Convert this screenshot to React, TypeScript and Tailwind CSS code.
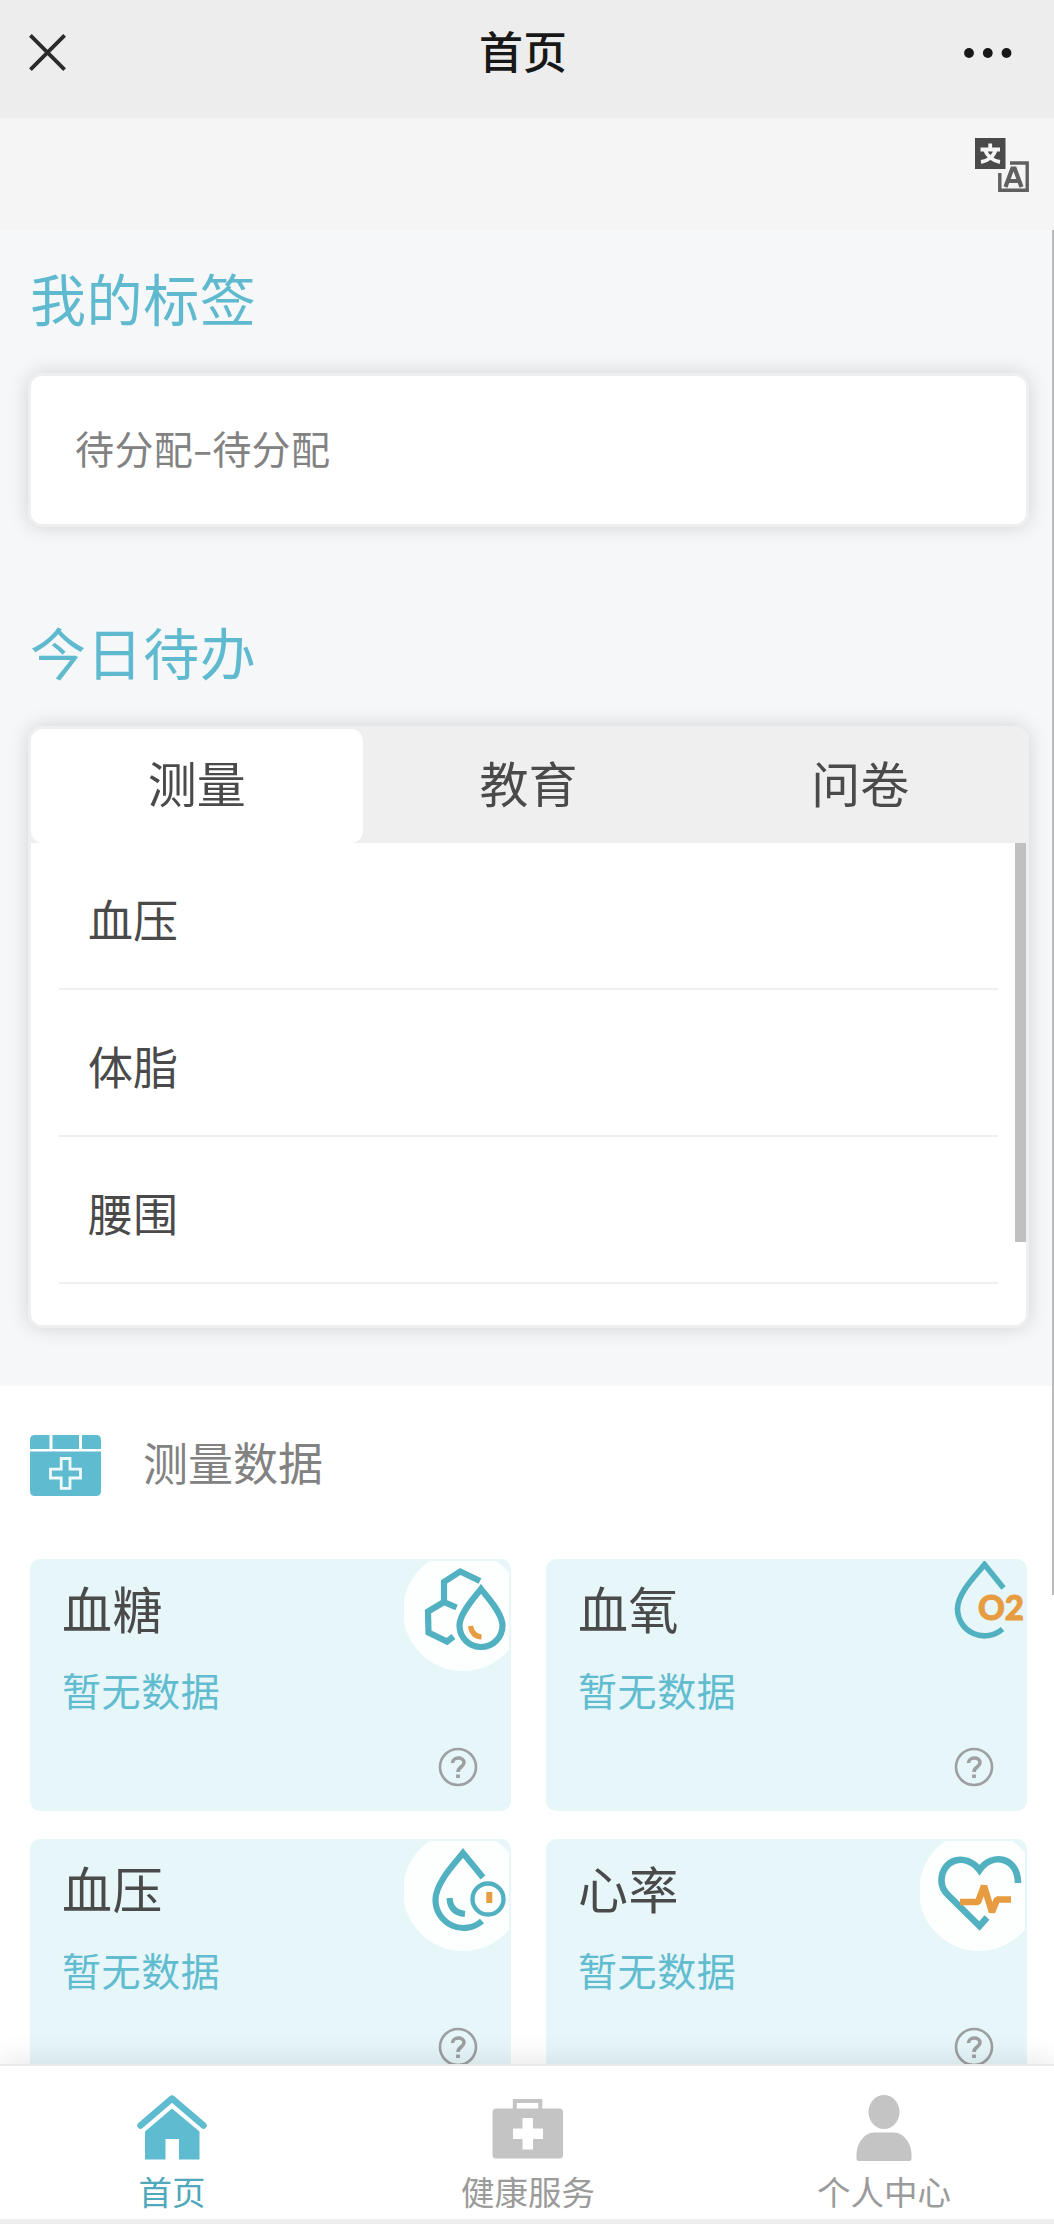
import { useState } from 'react';
import type { ReactNode } from 'react';

const TABS = ['测量', '教育', '问卷'] as const;
const TODOS = ['血压', '体脂', '腰围'];

const TEAL = '#52b1c1';
const ORANGE = '#e89c41';

function CloseIcon() {
  return (
    <svg width="37" height="37" viewBox="0 0 37 37" fill="none" stroke="#2b2b2b" strokeWidth="3.8">
      <path d="M1.4 1.4 L35.6 35.6 M35.6 1.4 L1.4 35.6" />
    </svg>
  );
}

function MoreIcon() {
  return (
    <svg width="48" height="10" viewBox="0 0 48 10" fill="#181818">
      <circle cx="5" cy="5" r="4.9" />
      <circle cx="23.8" cy="5" r="4.9" />
      <circle cx="42.5" cy="5" r="4.9" />
    </svg>
  );
}

function TranslateIcon() {
  return (
    <svg width="54" height="54" viewBox="0 0 54 54" fill="none">
      <rect width="30.5" height="31" fill="#4a4a4a" />
      <path d="M5.5 11.5 H25 M15.2 5.5 V11 M20.5 12 C19 18 13 23 6 24 M10 12 C12 18 18 23 25 24" stroke="#f5f5f5" strokeWidth="3.8" />
      <path d="M35 25 H52.2 V52.2 H24.8 V35" stroke="#606060" strokeWidth="3.4" />
      <path d="M30.5 49 L37.3 30.5 H39.7 L46.5 49 M33 43 H44" stroke="#606060" strokeWidth="4.2" />
    </svg>
  );
}

function CalendarIcon() {
  return (
    <svg width="72" height="62" viewBox="0 0 72 62" fill="#5fbbcf">
      <path d="M5 0 H19.5 V14 H0 V5 Q0 0 5 0 Z" />
      <rect x="22.5" width="26.5" height="14" />
      <path d="M52 0 H66 Q71 0 71 5 V14 H52 Z" />
      <path d="M0 16.5 H71 V56 Q71 61 66 61 H5 Q0 61 0 56 Z" />
      <path
        d="M31.2 23.5 H40 V34.2 H50.5 V43 H40 V53.3 H31.2 V43 H20.5 V34.2 H31.2 Z"
        fill="none"
        stroke="#eefafc"
        strokeWidth="2.8"
      />
    </svg>
  );
}

function HelpIcon() {
  return (
    <svg width="40" height="40" viewBox="0 0 40 40" fill="none" stroke="#9d9fa0">
      <circle cx="20" cy="20" r="18" strokeWidth="2.6" />
      <path d="M14.5 16 C14.5 9.5 26 9.5 26 15.5 C26 20 20 20 20 25" strokeWidth="3.6" />
      <path d="M20 27.5 V31" strokeWidth="3.8" />
    </svg>
  );
}

// Badge drawings share the 105x110 corner box of a metric card
function SugarIcon() {
  return (
    <svg width="105" height="110" viewBox="0 0 105 110" fill="none" stroke={TEAL} strokeWidth="6.2">
      <path d="M76 20 L56.3 10.5 L40 21 V41 L52.5 46.5" />
      <path d="M40 41 L24 50.5 L24.5 71.5 L43 80.5 L49.5 75.5" />
      <path d="M77 28 C71 36 55.5 52 55.5 64.5 A21.5 21.5 0 0 0 98.5 64.5 C98.5 52 83 36 77 28 Z" />
      <path d="M66.5 65 C67.5 71 71 75.5 77.5 76" stroke={ORANGE} strokeWidth="5.2" />
    </svg>
  );
}

function OxygenIcon() {
  return (
    <svg width="105" height="110" viewBox="0 0 105 110" fill="none" stroke={TEAL} strokeWidth="5.6">
      <path d="M83.5 27 L64.5 3.5 C55.5 15 37.5 32 37.5 48 A27 27 0 0 0 82.5 68" />
      <text
        x="58"
        y="59"
        fill={ORANGE}
        stroke={ORANGE}
        strokeWidth="1"
        fontFamily="Lato, sans-serif"
        fontSize="35"
        fontWeight="900"
        textLength="46"
        lengthAdjust="spacingAndGlyphs"
      >
        O2
      </text>
    </svg>
  );
}

function PressureIcon() {
  return (
    <svg width="105" height="110" viewBox="0 0 105 110" fill="none" stroke={TEAL} strokeWidth="6.2">
      <path d="M79 36.5 L59 12 C50 23.5 31.5 42 31.5 59 A28 28 0 0 0 78 80" />
      <path d="M45.5 57 C46 66 51 72 61 73" />
      <circle cx="84" cy="58" r="15.5" strokeWidth="4.4" />
      <path d="M85.3 51 V62" stroke={ORANGE} strokeWidth="6" />
    </svg>
  );
}

function HeartIcon() {
  return (
    <svg width="105" height="110" viewBox="0 0 105 110" fill="none" stroke={TEAL} strokeWidth="6.6">
      <path d="M98 42 C98 16 72 11 59.5 29 C46 11 21.5 18 21.5 40 C21.5 46 24 50 28 54 L59.5 85 L67 76.5" />
      <path d="M40 61 H58 L64 45 L72 71 L77 58.5 H91" stroke={ORANGE} strokeLinejoin="bevel" />
    </svg>
  );
}

function HomeIcon() {
  return (
    <svg width="70" height="68" viewBox="0 0 70 68" fill="#5fbbcf">
      <path
        d="M3.5 31.5 L35 4.5 L66.5 31.5"
        fill="none"
        stroke="#5fbbcf"
        strokeWidth="6.5"
        strokeLinecap="round"
        strokeLinejoin="round"
      />
      <path d="M35 14.5 L62.5 37.5 V65.5 H42 V45 H28.5 V65.5 H8 V37.5 Z" />
    </svg>
  );
}

function KitIcon() {
  return (
    <svg width="72" height="68" viewBox="0 0 72 68" fill="#c4c4c4">
      <path d="M22.8 16 V7 H48.3 V16" fill="none" stroke="#c4c4c4" strokeWidth="4" />
      <path
        fillRule="evenodd"
        d="M4 14.5 H67.5 Q71 14.5 71 18 V61 Q71 64.5 67.5 64.5 H4 Q.5 64.5 .5 61 V18 Q.5 14.5 4 14.5 Z M30.5 24 V34.5 H21 V45 H30.5 V55.5 H41 V45 H51 V34.5 H41 V24 Z"
      />
    </svg>
  );
}

function PersonIcon() {
  return (
    <svg width="58" height="68" viewBox="0 0 58 68" fill="#c4c4c4">
      <ellipse cx="29" cy="18" rx="15.5" ry="17" />
      <path d="M19 38.5 H39 C49 38.5 56.5 50 56.5 61 V65 Q56.5 67 54.5 67 H3.5 Q1.5 67 1.5 65 V61 C1.5 50 9 38.5 19 38.5 Z" />
    </svg>
  );
}

const METRICS = [
  { name: '血糖', icon: <SugarIcon />, round: true },
  { name: '血氧', icon: <OxygenIcon />, round: false },
  { name: '血压', icon: <PressureIcon />, round: true },
  { name: '心率', icon: <HeartIcon />, round: true },
];

const NAV = [
  { label: '首页', icon: <HomeIcon />, active: true },
  { label: '健康服务', icon: <KitIcon />, active: false },
  { label: '个人中心', icon: <PersonIcon />, active: false },
];

function SectionTitle({ children }: { children: ReactNode }) {
  return <h2 className="text-[56px] leading-[60px] tracking-[0.6px] text-[#60bacf]">{children}</h2>;
}

function MetricCard({ name, icon, round }: { name: string; icon: ReactNode; round: boolean }) {
  return (
    <div className="relative h-[252px] rounded-[10px] border-2 border-[#e6f6f9] bg-[#e6f6f9] pl-[30px] pt-[16px]">
      <div className="text-[50px] leading-[60px] tracking-[0.5px] text-[#4a4a4a]">{name}</div>
      <div className="mt-[22px] text-[39px] leading-[60px] tracking-[0.6px] text-[#62bccf]">暂无数据</div>
      <div className={`absolute right-0 top-0 h-[110px] w-[105px] ${round ? 'overflow-hidden rounded-tr-lg' : ''}`}>
        {round && <div className="absolute -left-px -top-[10px] size-[120px] rounded-full bg-[#fcfffe]" />}
        <div className="relative">{icon}</div>
      </div>
      <div className="absolute right-[31px] top-[186px]">
        <HelpIcon />
      </div>
    </div>
  );
}

export default function App() {
  const [tab, setTab] = useState<string>('测量');

  return (
    <div className="relative flex h-[2224px] w-[1054px] flex-col overflow-hidden bg-white font-['Noto_Sans_CJK_SC',sans-serif]">
      <header className="flex h-[118px] shrink-0 items-start justify-between bg-[#ededed] pl-[29px] pr-[42px]">
        <div className="mt-[34px] w-[53px]"><CloseIcon /></div>
        <h1 className="mt-[20px] text-[44px] font-medium leading-[60px] text-[#181818]">首页</h1>
        <div className="mt-[48px] flex w-[48px] justify-end"><MoreIcon /></div>
      </header>

      <div className="flex h-[112px] shrink-0 justify-end bg-[#f5f5f5] pr-[25px] pt-5">
        <TranslateIcon />
      </div>

      <main className="relative min-h-0 flex-1 overflow-hidden">
        <section className="h-[1156px] bg-[#f5f7f9] px-[25px] pl-7 pt-[37px]">
          <div className="pl-0.5"><SectionTitle>我的标签</SectionTitle></div>
          <div className="mt-[46px] flex h-[154px] items-center rounded-[14px] border-[3px] border-[#efefef] bg-white pb-[6px] pl-[44px] text-[39px] tracking-[0.4px] text-[#828282] shadow-[0_0_20px_rgba(0,0,0,0.15)]">
            待分配<span className="ml-[3px] mr-[2px] inline-block scale-x-150">-</span>待分配
          </div>

          <div className="mt-[94px] pl-0.5"><SectionTitle>今日待办</SectionTitle></div>
          <div className="mt-[45px] h-[602px] overflow-hidden rounded-[14px] border-[3px] border-[#efefef] bg-white shadow-[0_0_20px_rgba(0,0,0,0.15)]">
            <div className="flex h-[114px] bg-[#efefef]">
              {TABS.map((t) => (
                <button
                  key={t}
                  onClick={() => setTab(t)}
                  className={`flex-1 rounded-xl pb-2 text-[49px] leading-[60px] text-[#4a4a4a] ${tab === t ? 'bg-white' : ''}`}
                >
                  {t}
                </button>
              ))}
            </div>
            <div className="flex h-[482px] justify-between overflow-hidden">
              <ul className="ml-7 w-[939px]">
                {TODOS.map((item) => (
                  <li
                    key={item}
                    className="h-[147px] border-b-2 border-[#efefef] pl-[29px] pt-[46px] text-[45px] leading-[60px] text-[#4a4a4a]"
                  >
                    {item}
                  </li>
                ))}
              </ul>
              <div className="h-[399px] w-[11px] bg-[#c0c0c0]" />
            </div>
          </div>
        </section>

        <section className="px-[27px] pl-[30px] pt-[49px]">
          <div className="flex h-[62px] items-center gap-[41px]">
            <CalendarIcon />
            <span className="pb-2 text-[45px] leading-[60px] text-[#828282]">测量数据</span>
          </div>
          <div className="mt-[62px] grid grid-cols-2 gap-x-[35px] gap-y-7">
            {METRICS.map((m) => (
              <MetricCard key={m.name} {...m} />
            ))}
          </div>
        </section>

        {/* page scroll thumb */}
        <div className="absolute right-0 top-0 h-[1365px] w-0.5 bg-[#bbb]" />
      </main>

      <nav className="relative flex h-[160px] shrink-0 justify-between border-b-[5px] border-t-2 border-b-[#ededed] border-t-[#eaeaea] bg-white pl-[105px] pr-[103px] pt-[28px] shadow-[0_0_30px_rgba(0,0,0,0.12)]">
        {NAV.map((n) => (
          <div key={n.label} className="flex w-[134px] flex-col items-center">
            {n.icon}
            <span
              className={`mt-[9px] whitespace-nowrap text-[33.5px] leading-[40px] ${n.active ? 'text-[#4fa8bb]' : 'text-[#9b9b9b]'}`}
            >
              {n.label}
            </span>
          </div>
        ))}
      </nav>
    </div>
  );
}
